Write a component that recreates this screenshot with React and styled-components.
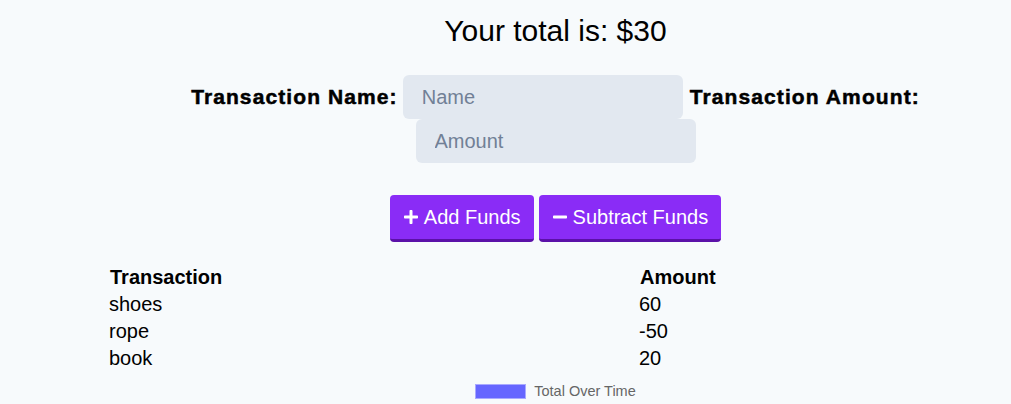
import React, { useState } from "react";
import styled, { createGlobalStyle } from "styled-components";
import { FaPlus, FaMinus } from "react-icons/fa";

const GlobalStyle = createGlobalStyle`
  html, body {
    background: #f7fafc;
  }
  body {
    margin: 8px;
    font-family: "Liberation Sans", Arial, sans-serif;
    color: #000;
  }
`;

const Page = styled.div`
  margin-left: 100px;
  display: flex;
  flex-direction: column;
  align-items: center;
`;

const Total = styled.h1`
  margin: 0;
  padding-top: 4px;
  font-size: 30px;
  font-weight: normal;
  line-height: 38px;
`;

const Form = styled.form`
  margin-top: 25px;
  width: 100%;
  display: flex;
  flex-direction: column;
  align-items: center;
`;

const Fields = styled.div`
  display: flex;
  flex-wrap: wrap;
  justify-content: center;
  align-items: center;
  column-gap: 5px;
  width: 100%;
`;

const Label = styled.label`
  font-size: 21px;
  font-weight: bold;
  letter-spacing: 1.1px;
  -webkit-text-stroke: 0.5px #000;
  margin-left: ${props => (props.gapLeft ? "2px" : "0")};
`;

const Input = styled.input`
  width: 280px;
  height: 44px;
  box-sizing: border-box;
  border: none;
  border-radius: 6px;
  background: #e2e8f0;
  padding: 0 19px;
  font-family: "Liberation Sans", Arial, sans-serif;
  font-size: 20px;
  color: #2d3748;
  outline: none;
  &::placeholder {
    color: #718096;
  }
`;

const Buttons = styled.div`
  display: flex;
  gap: 5px;
  margin-top: 32px;
`;

const Button = styled.button`
  display: flex;
  align-items: center;
  gap: 5px;
  height: 47px;
  box-sizing: border-box;
  padding: 0 13px;
  border: none;
  border-bottom: 3px solid #5b11a8;
  border-radius: 4px;
  background: #8a2cf6;
  color: #fff;
  font-family: "Liberation Sans", Arial, sans-serif;
  font-size: 20px;
  cursor: pointer;
  svg {
    width: 16px;
    height: 16px;
  }
`;

const Table = styled.div`
  align-self: stretch;
  margin-top: 22px;
  display: grid;
  grid-template-columns: 530px auto;
  font-size: 20px;
  line-height: 27px;
`;

const Head = styled.div`
  font-weight: bold;
  padding-left: 2px;
`;

const Cell = styled.div`
  padding-left: 1px;
`;

const Legend = styled.div`
  display: flex;
  align-items: center;
  gap: 8px;
  margin-top: 11px;
  font-size: 14.5px;
  color: #666;
`;

const Swatch = styled.span`
  flex-shrink: 0;
  width: 49px;
  height: 13px;
  background: #6666ff;
  border: 1px solid #a9a9ff;
`;

const transactions = [
  { name: "shoes", amount: 60 },
  { name: "rope", amount: -50 },
  { name: "book", amount: 20 },
];

export default function App() {
  const [name, setName] = useState("");
  const [amount, setAmount] = useState("");
  const total = transactions.reduce((s, t) => s + t.amount, 0);

  return (
    <>
      <GlobalStyle />
      <Page>
        <Total>Your total is: ${total}</Total>
        <Form onSubmit={e => e.preventDefault()}>
          <Fields>
            <Label htmlFor="name">Transaction Name:</Label>
            <Input
              id="name"
              placeholder="Name"
              value={name}
              onChange={e => setName(e.target.value)}
            />
            <Label htmlFor="amount" gapLeft>
              Transaction Amount:
            </Label>
            <Input
              id="amount"
              placeholder="Amount"
              value={amount}
              onChange={e => setAmount(e.target.value)}
            />
          </Fields>
          <Buttons>
            <Button type="button">
              <FaPlus /> Add Funds
            </Button>
            <Button type="button">
              <FaMinus /> Subtract Funds
            </Button>
          </Buttons>
        </Form>
        <Table>
          <Head>Transaction</Head>
          <Head>Amount</Head>
          {transactions.map((t, i) => (
            <React.Fragment key={`tx${i}`}>
              <Cell>{t.name}</Cell>
              <Cell>{t.amount}</Cell>
            </React.Fragment>
          ))}
        </Table>
        <Legend>
          <Swatch />
          Total Over Time
        </Legend>
      </Page>
    </>
  );
}
